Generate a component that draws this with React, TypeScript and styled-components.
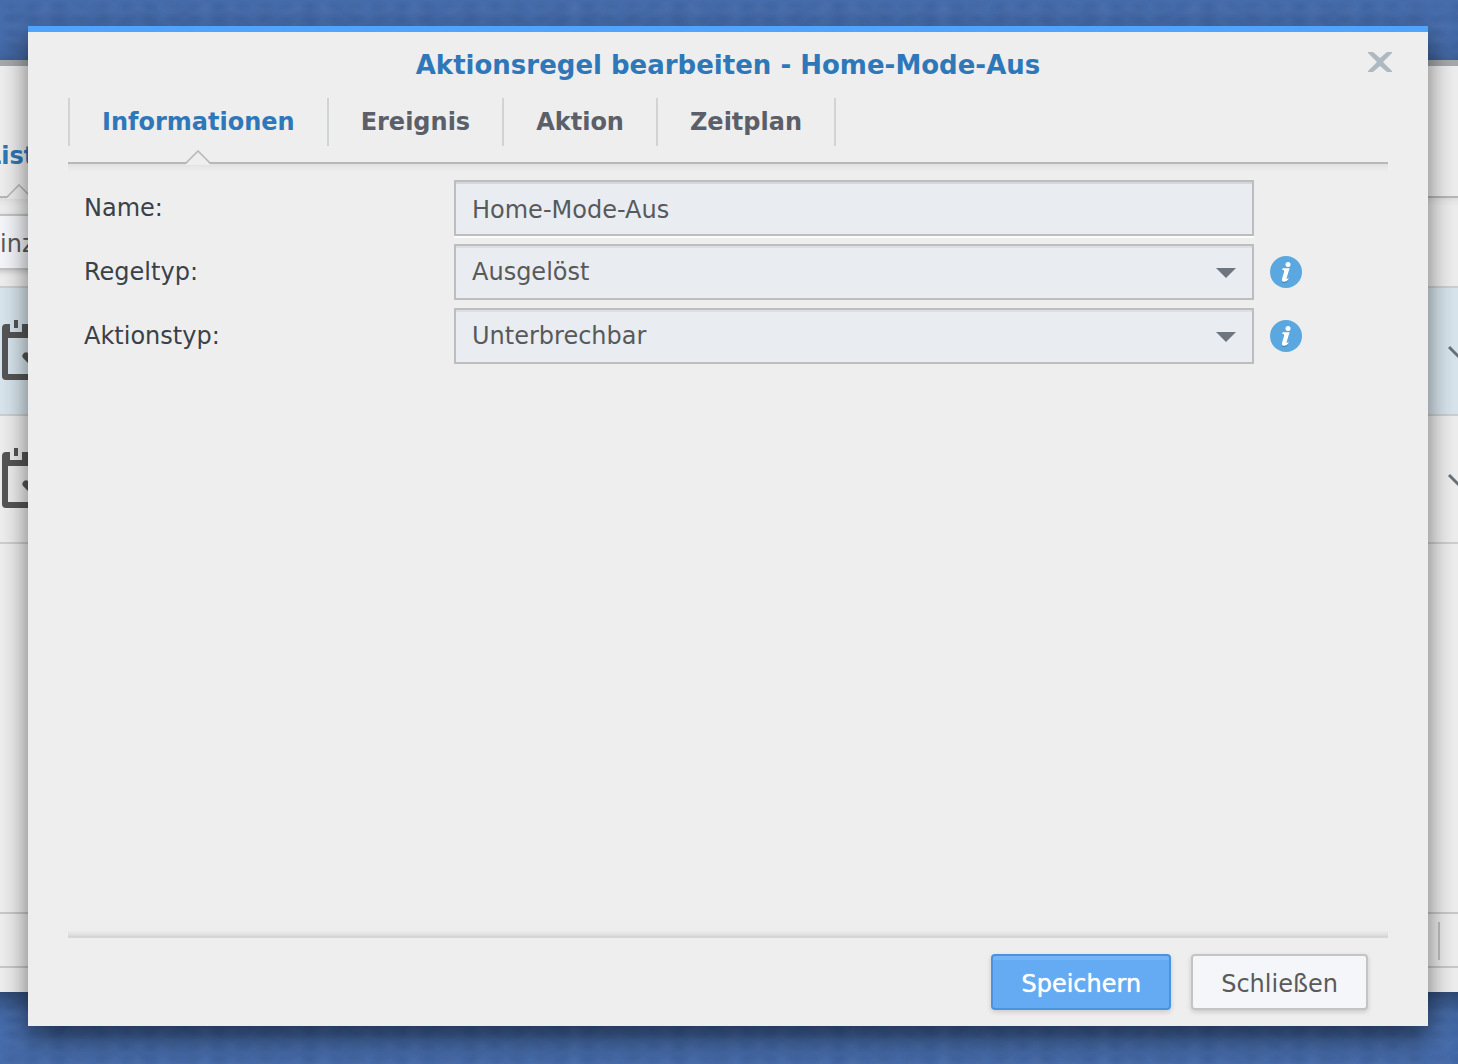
import React, { useState } from "react";
import styled, { createGlobalStyle } from "styled-components";

const GlobalStyle = createGlobalStyle`
  *, *::before, *::after { box-sizing: border-box; }
  html, body { margin: 0; height: 100%; }
  body, button, input, select {
    font-family: "DejaVu Sans", Verdana, sans-serif;
    font-size: 24px;
    line-height: 32px;
  }
  #root { height: 100%; }
`;

const Desktop = styled.div`
  position: relative;
  display: flex;
  min-height: 100vh;
  padding: 26px 30px 38px 28px;
  overflow: hidden;
  background-color: #466cab;
  background-image:
    radial-gradient(ellipse, rgba(0, 20, 60, 0.07), transparent 70%),
    radial-gradient(ellipse, rgba(255, 255, 255, 0.03), transparent 70%),
    radial-gradient(ellipse, rgba(0, 20, 60, 0.05), transparent 70%);
  background-size: 23px 13px, 31px 17px, 41px 29px;
`;

const BackWindow = styled.section`
  position: absolute;
  top: 60px;
  bottom: 72px;
  left: -88px;
  right: -90px;
  display: flex;
  flex-direction: column;
  padding-top: 32px;
  border-top: 6px solid #a5a9ac;
  background: #eeeeee;
  box-shadow: 0 8px 24px rgba(0, 0, 0, 0.4);
`;

const Dialog = styled.section`
  position: relative;
  flex: 1;
  display: flex;
  flex-direction: column;
  padding: 0 40px 16px;
  border-top: 6px solid #50a4fb;
  background: #eeeeee;
  box-shadow: 0 12px 26px rgba(0, 0, 0, 0.54);
`;

const TitleBar = styled.header`
  display: grid;
  grid-template-columns: 24px 1fr 24px;
  align-items: center;
  height: 66px;
  margin-right: -4px;
  margin-left: -4px;
`;

const Title = styled.h1`
  grid-column: 2;
  margin: 0;
  color: #2e78b9;
  font-size: 26px;
  line-height: 32px;
  text-align: center;
`;

const CloseButton = styled.button`
  display: flex;
  width: 24px;
  padding: 0 0 6px;
  border: 0;
  background: none;
  cursor: pointer;
`;

const Tabs = styled.nav`
  display: flex;
  height: 66px;
  border-bottom: 2px solid #b7b8b8;
`;

const Tab = styled.button<{ $active?: boolean }>`
  position: relative;
  height: 48px;
  padding: 0 32px;
  border: 0;
  border-left: 2px solid #d2d3d3;
  background: none;
  color: ${(p) => (p.$active ? "#2e78b9" : "#5b5f69")};
  font-weight: bold;
  cursor: pointer;

  &:last-child { border-right: 2px solid #d2d3d3; }
`;

const Notch = styled.svg`
  position: absolute;
  top: 52px;
  left: 50%;
  width: 28px;
  height: 15px;
  margin-left: -14px;
`;

const Form = styled.form`
  flex: 1;
  display: flex;
  flex-direction: column;
  gap: 8px;
  padding: 16px 86px 0 16px;
  background: linear-gradient(#e0e0e0, #e7e7e7 3px, #eeeeee) top / 100% 8px no-repeat;
`;

const Row = styled.div`
  display: grid;
  grid-template-columns: 354px 1fr 32px;
  column-gap: 16px;
  align-items: center;
`;

const Label = styled.label`
  color: #394149;
`;

const TextInput = styled.input`
  width: 100%;
  height: 56px;
  padding: 4px 16px 0;
  border: 2px solid #bcbdbe;
  border-radius: 0;
  outline: none;
  background: #e9edf2;
  box-shadow: inset 0 2px #d3d6da, 0 2px #fbfbfb;
  color: #58595a;
`;

const SelectBox = styled.div`
  display: grid;
  align-items: center;

  & > * { grid-area: 1 / 1; }
`;

const Select = styled.select`
  appearance: none;
  width: 100%;
  height: 56px;
  padding: 0 56px 0 16px;
  border: 2px solid #bcbdbe;
  border-radius: 0;
  outline: none;
  background: #e9edf2;
  box-shadow: inset 0 2px #dcdfe3;
  color: #58595a;
`;

const Arrow = styled.svg`
  justify-self: end;
  width: 20px;
  height: 12px;
  margin-right: 18px;
  pointer-events: none;
`;

const InfoButton = styled.button`
  display: flex;
  width: 32px;
  padding: 0;
  border: 0;
  background: none;
  cursor: pointer;
`;

const Footer = styled.footer`
  display: flex;
  justify-content: flex-end;
  gap: 20px;
  padding: 24px 20px 0 0;
  background: linear-gradient(#eeeeee, #e0e0e0 5px, #d5d5d5 6px, #d5d5d5 8px) top / 100% 8px no-repeat;
`;

const Button = styled.button<{ $primary?: boolean }>`
  height: 56px;
  padding: 4px 28px 0;
  border: 2px solid ${(p) => (p.$primary ? "#4a93e2" : "#c4c4c5")};
  border-radius: 4px;
  background: ${(p) => (p.$primary ? "linear-gradient(#74b4f7 4px, #64abf4 4px)" : "#f5f6fa")};
  box-shadow: 0 2px 5px rgba(0, 0, 0, 0.16);
  color: ${(p) => (p.$primary ? "#ffffff" : "#5a5a5a")};
  text-shadow: ${(p) => (p.$primary ? "0 0 1px #ffffff" : "none")};
  cursor: pointer;
`;

const BackTabs = styled(Tabs)`
  height: 100px;
  margin: 0 40px;
  padding-top: 34px;
`;

const Toolbar = styled.div`
  flex: none;
  height: 90px;
  padding: 16px 40px;
  border-bottom: 2px solid #cfcfcf;
  background: linear-gradient(#e0e0e0, #e7e7e7 3px, #eeeeee) top / 100% 8px no-repeat;
`;

const RuleRow = styled.div<{ $selected?: boolean }>`
  flex: none;
  display: flex;
  align-items: center;
  justify-content: space-between;
  height: 128px;
  padding: 0 76px 0 90px;
  border-bottom: 2px solid #cfcfcf;
  background: ${(p) => (p.$selected ? "#d8e5ed" : "transparent")};
`;

const StatusBar = styled.div`
  display: flex;
  justify-content: flex-end;
  height: 56px;
  margin: auto 0 24px;
  padding: 8px 108px 6px 0;
  border: 2px solid #c9c9c9;
  border-width: 2px 0;
`;

const Divider = styled.span`
  width: 2px;
  background: #c1c1c1;
`;

const TabNotch = () => (
  <Notch viewBox="0 0 28 15" aria-hidden="true">
    <path d="M1 15 14 2 27 15Z" fill="#eeeeee" />
    <path d="M0 13h2L14 1l12 12h2" fill="none" stroke="#b7b8b8" strokeWidth="1.6" />
  </Notch>
);

const CalendarIcon = () => (
  <svg width="56" height="62" viewBox="0 0 56 62" aria-hidden="true">
    <path
      fill="#555"
      fillRule="evenodd"
      d="M4 4h4v8h12V4h16v8h12V4h4q4 0 4 4v48q0 4-4 4H4q-4 0-4-4V8q0-4 4-4ZM6 18v36h44V18Z"
    />
    <path fill="#555" d="M12 0h4v8h-4ZM40 0h4v8h-4Z" />
    <path d="m24 36 6 6 12-12" fill="none" stroke="#555" strokeWidth="7" strokeLinecap="round" />
  </svg>
);

const ChevronIcon = () => (
  <svg width="24" height="18" viewBox="0 0 24 18" aria-hidden="true">
    <path d="m1 5 11 11L23 5" fill="none" stroke="#687078" strokeWidth="3" />
  </svg>
);

const CloseIcon = () => (
  <svg width="24" height="20" viewBox="0 0 24 20" aria-hidden="true">
    <path fill="#afb9c2" d="M0 0h5l7 6 7-6h5v1l-9 9 9 9v1h-5l-7-6-7 6H0v-1l9-9-9-9Z" />
  </svg>
);

const InfoIcon = () => (
  <svg width="32" height="32" viewBox="0 0 32 32" aria-hidden="true">
    <circle cx="16" cy="16" r="16" fill="#5ba7df" />
    <path
      fill="#3d83b9"
      d="M12.5 13.5h6.6l-3 10.3q-.2.9.7.5l1.6-.9q-1.4 3.6-4.4 3.6-2.7 0-1.8-3.2l2-7.3q.3-1.4-1-1.4h-1.1Z"
    />
    <g fill="#fff">
      <circle cx="18" cy="8.4" r="2.5" />
      <path d="M12.6 12.2h7l-3 10q-.2.9.7.5l1.6-.9q-1.4 4-4.7 4-3 0-2.1-3.4l2-6.7q.3-1.4-1-1.4h-.9Z" />
    </g>
  </svg>
);

const tabs = ["Informationen", "Ereignis", "Aktion", "Zeitplan"];

const selects = [
  { id: "rule-type", label: "Regeltyp:", value: "Ausgelöst" },
  { id: "action-type", label: "Aktionstyp:", value: "Unterbrechbar" },
];

export default function App() {
  const [active, setActive] = useState(0);
  const [name, setName] = useState("Home-Mode-Aus");

  return (
    <>
      <GlobalStyle />
      <Desktop>
        <BackWindow>
          <BackTabs>
            <Tab $active tabIndex={-1}>
              Liste
              <TabNotch />
            </Tab>
          </BackTabs>
          <Toolbar>
            <Button tabIndex={-1}>Hinzufügen</Button>
          </Toolbar>
          <RuleRow $selected>
            <CalendarIcon />
            <ChevronIcon />
          </RuleRow>
          <RuleRow>
            <CalendarIcon />
            <ChevronIcon />
          </RuleRow>
          <StatusBar>
            <Divider />
          </StatusBar>
        </BackWindow>

        <Dialog role="dialog" aria-labelledby="dialog-title">
          <TitleBar>
            <Title id="dialog-title">Aktionsregel bearbeiten - Home-Mode-Aus</Title>
            <CloseButton aria-label="Schließen">
              <CloseIcon />
            </CloseButton>
          </TitleBar>
          <Tabs>
            {tabs.map((tab, i) => (
              <Tab key={tab} $active={i === active} onClick={() => setActive(i)}>
                {tab}
                {i === active && <TabNotch />}
              </Tab>
            ))}
          </Tabs>
          <Form onSubmit={(e) => e.preventDefault()}>
            <Row>
              <Label htmlFor="rule-name">Name:</Label>
              <TextInput id="rule-name" value={name} onChange={(e) => setName(e.target.value)} />
            </Row>
            {selects.map((field) => (
              <Row key={field.id}>
                <Label htmlFor={field.id}>{field.label}</Label>
                <SelectBox>
                  <Select id={field.id} defaultValue={field.value}>
                    <option>{field.value}</option>
                  </Select>
                  <Arrow viewBox="0 0 20 12" aria-hidden="true">
                    <path d="M0 2h20L10 12Z" fill="#6d757e" />
                  </Arrow>
                </SelectBox>
                <InfoButton type="button" aria-label="Info">
                  <InfoIcon />
                </InfoButton>
              </Row>
            ))}
          </Form>
          <Footer>
            <Button $primary>Speichern</Button>
            <Button>Schließen</Button>
          </Footer>
        </Dialog>
      </Desktop>
    </>
  );
}
